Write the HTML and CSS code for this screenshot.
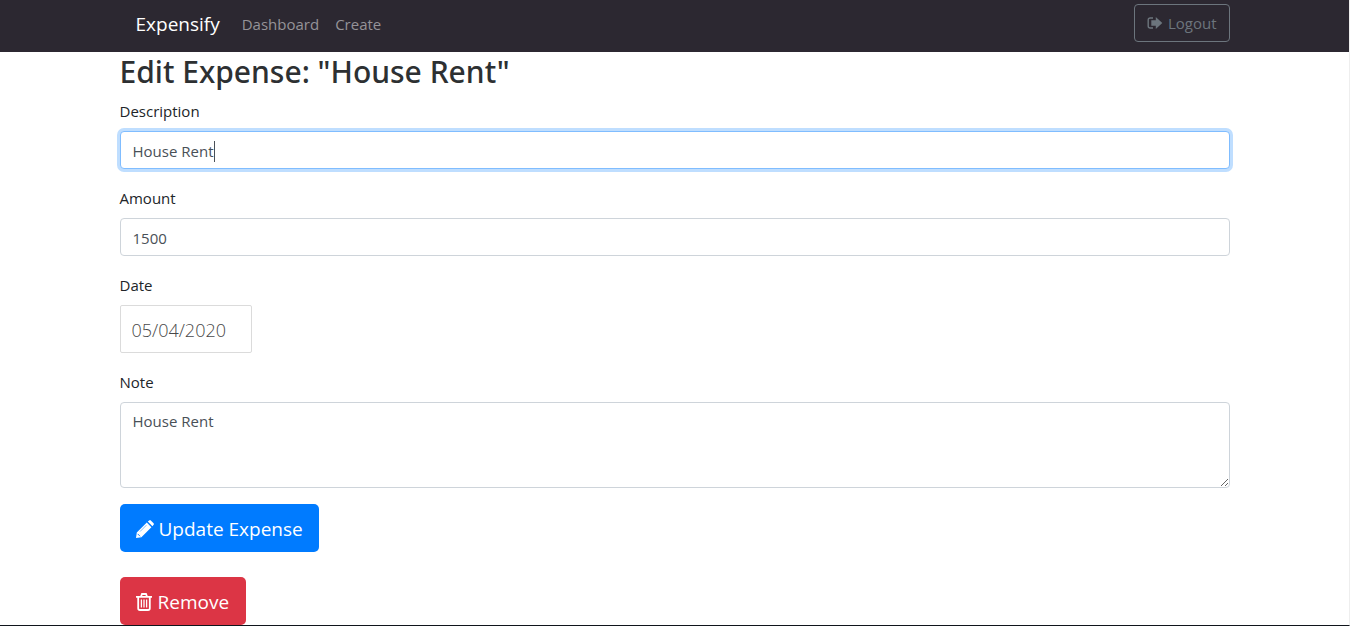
FILE: index.html
```html
<!DOCTYPE html>
<html lang="en">
<head>
<meta charset="utf-8">
<meta name="viewport" content="width=device-width, initial-scale=1">
<title>Expensify</title>
<link rel="stylesheet" href="styles.css">
</head>
<body>
<div class="page">
  <header class="navbar">
    <nav class="container navbar-inner">
      <a class="brand" href="#">Expensify</a>
      <a class="nav-link" href="#">Dashboard</a>
      <a class="nav-link" href="#">Create</a>
      <button class="btn btn-outline" type="button">
        <svg class="icon-logout" viewBox="0 0 16 14" aria-hidden="true"><path d="M6 2H3.2Q1.2 2 1.2 4V10Q1.2 12 3.2 12H6" fill="none" stroke="currentColor" stroke-width="1.4"/><path d="M4.3 4.3H8.8V1L15.3 7L8.8 13V9.7H4.3Z" fill="currentColor"/></svg>
        <span>Logout</span>
      </button>
    </nav>
  </header>
  <main class="container">
    <h1 class="title">Edit Expense: "House Rent"</h1>
    <form class="form">
      <div class="field">
        <label for="description">Description</label>
        <div class="control-wrap">
          <input class="control" id="description" type="text" value="House Rent" autofocus>
          <span class="caret"></span>
        </div>
      </div>
      <div class="field">
        <label for="amount">Amount</label>
        <input class="control" id="amount" type="text" value="1500">
      </div>
      <div class="field">
        <label for="date">Date</label>
        <input class="date" id="date" type="text" value="05/04/2020">
      </div>
      <div class="field">
        <label for="note">Note</label>
        <textarea class="control note" id="note">House Rent</textarea>
      </div>
      <button class="btn btn-large btn-primary" type="button">
        <svg class="icon-pencil" viewBox="0 0 18 18" aria-hidden="true"><path d="M0 18L.8 12.6L10.8 2.6L15.4 7.2L5.4 17.2Z M11.8 1.6L13.2 .4Q14 -.2 14.8 .4L17.6 3.2Q18.2 4 17.6 4.8L16.4 6.2Z" fill="currentColor"/><path d="M1.7 13.9L4.1 16.3" fill="none" stroke="#007bff" stroke-width=".9"/><path d="M4 11.6L10.4 5.2" fill="none" stroke="#007bff" stroke-width=".5"/></svg>
        <span>Update Expense</span>
      </button>
    </form>
    <button class="btn btn-large btn-danger" type="button">
      <svg class="icon-trash" viewBox="0 0 16 18" aria-hidden="true"><path d="M0 3.8H16M5 3.5L6 1H10L11 3.5M2.2 4V15.2Q2.2 17 4 17H12Q13.8 17 13.8 15.2V4" fill="none" stroke="currentColor" stroke-width="1.8"/><path d="M5.4 6.4V14.4M8 6.4V14.4M10.6 6.4V14.4" stroke="currentColor" stroke-width="1.3"/></svg>
      <span>Remove</span>
    </button>
  </main>
</div>
</body>
</html>
```
FILE: styles.css
```css
* {
  box-sizing: border-box;
}

body {
  margin: 0;
  background: #fff;
  color: #212529;
  font-family: "Segoe UI", "Open Sans", "Noto Sans", sans-serif;
  font-size: 15px;
  line-height: 24px;
}

.page {
  min-height: 100vh;
  border-right: 1px solid #eee;
  border-bottom: 1px solid #10151c;
}

.container {
  width: 100%;
  max-width: 1140px;
  margin: 0 auto;
  padding: 0 15px;
}

.navbar {
  padding: 4px 0 10px;
  background: #2c2831;
}

.navbar-inner {
  display: flex;
  align-items: center;
  padding: 0 15px 0 31px;
}

.brand {
  padding-top: 2px;
  margin-right: 14px;
  color: #fff;
  font-size: 19px;
  text-decoration: none;
}

.nav-link {
  padding: 2px 8px 0;
  color: #959398;
  text-decoration: none;
}

.btn {
  display: flex;
  align-items: center;
  border: 1px solid transparent;
  border-radius: 4px;
  font-family: inherit;
  font-size: 15px;
  line-height: 24px;
}

.btn-outline {
  margin-left: auto;
  padding: 6px 12px;
  gap: 5px;
  border-color: #6c757d;
  background: transparent;
  color: #6c757d;
}

.btn-large {
  padding: 9px 15px 7px;
  gap: 5px;
  border-radius: 5px;
  color: #fff;
  font-size: 19px;
  line-height: 30px;
}

.btn-primary {
  background: #007bff;
}

.btn-danger {
  margin-top: 25px;
  padding: 9px 16px 7px 15px;
  gap: 6px;
  background: #dc3545;
}

.icon-logout {
  width: 16px;
  height: 14px;
}

.icon-pencil {
  width: 18px;
  height: 18px;
}

.icon-trash {
  width: 16px;
  height: 18px;
}

.title {
  margin: 0 0 8px;
  padding-top: 1px;
  color: #2d3032;
  font-family: "Segoe UI", "Noto Sans", sans-serif;
  font-size: 30px;
  font-weight: 500;
  line-height: 38px;
}

.field {
  display: flex;
  flex-direction: column;
  align-items: flex-start;
  gap: 8px;
  margin-bottom: 17px;
}

.field:last-of-type {
  margin-bottom: 16px;
}

.control-wrap {
  position: relative;
  width: 100%;
}

.caret {
  position: absolute;
  top: 10px;
  left: 94px;
  width: 1px;
  height: 21px;
  background: #495057;
}

.control {
  display: block;
  width: 100%;
  height: 38px;
  padding: 7px 12px 5px;
  border: 1px solid #ced4da;
  border-radius: 4px;
  background: #fff;
  color: #495057;
  font: inherit;
}

.control:focus {
  border-color: #80bdff;
  outline: 0;
  box-shadow: 0 0 0 3px #bfdeff;
  caret-color: transparent;
}

.note {
  height: 86px;
  padding: 6px 12px;
  resize: vertical;
}

.date {
  width: 132px;
  height: 48px;
  padding: 10px 11px 8px;
  border: 1px solid #dbdbdb;
  border-radius: 2px;
  color: #484848;
  font-family: inherit;
  font-size: 18px;
  font-weight: 300;
  line-height: 24px;
}
```
